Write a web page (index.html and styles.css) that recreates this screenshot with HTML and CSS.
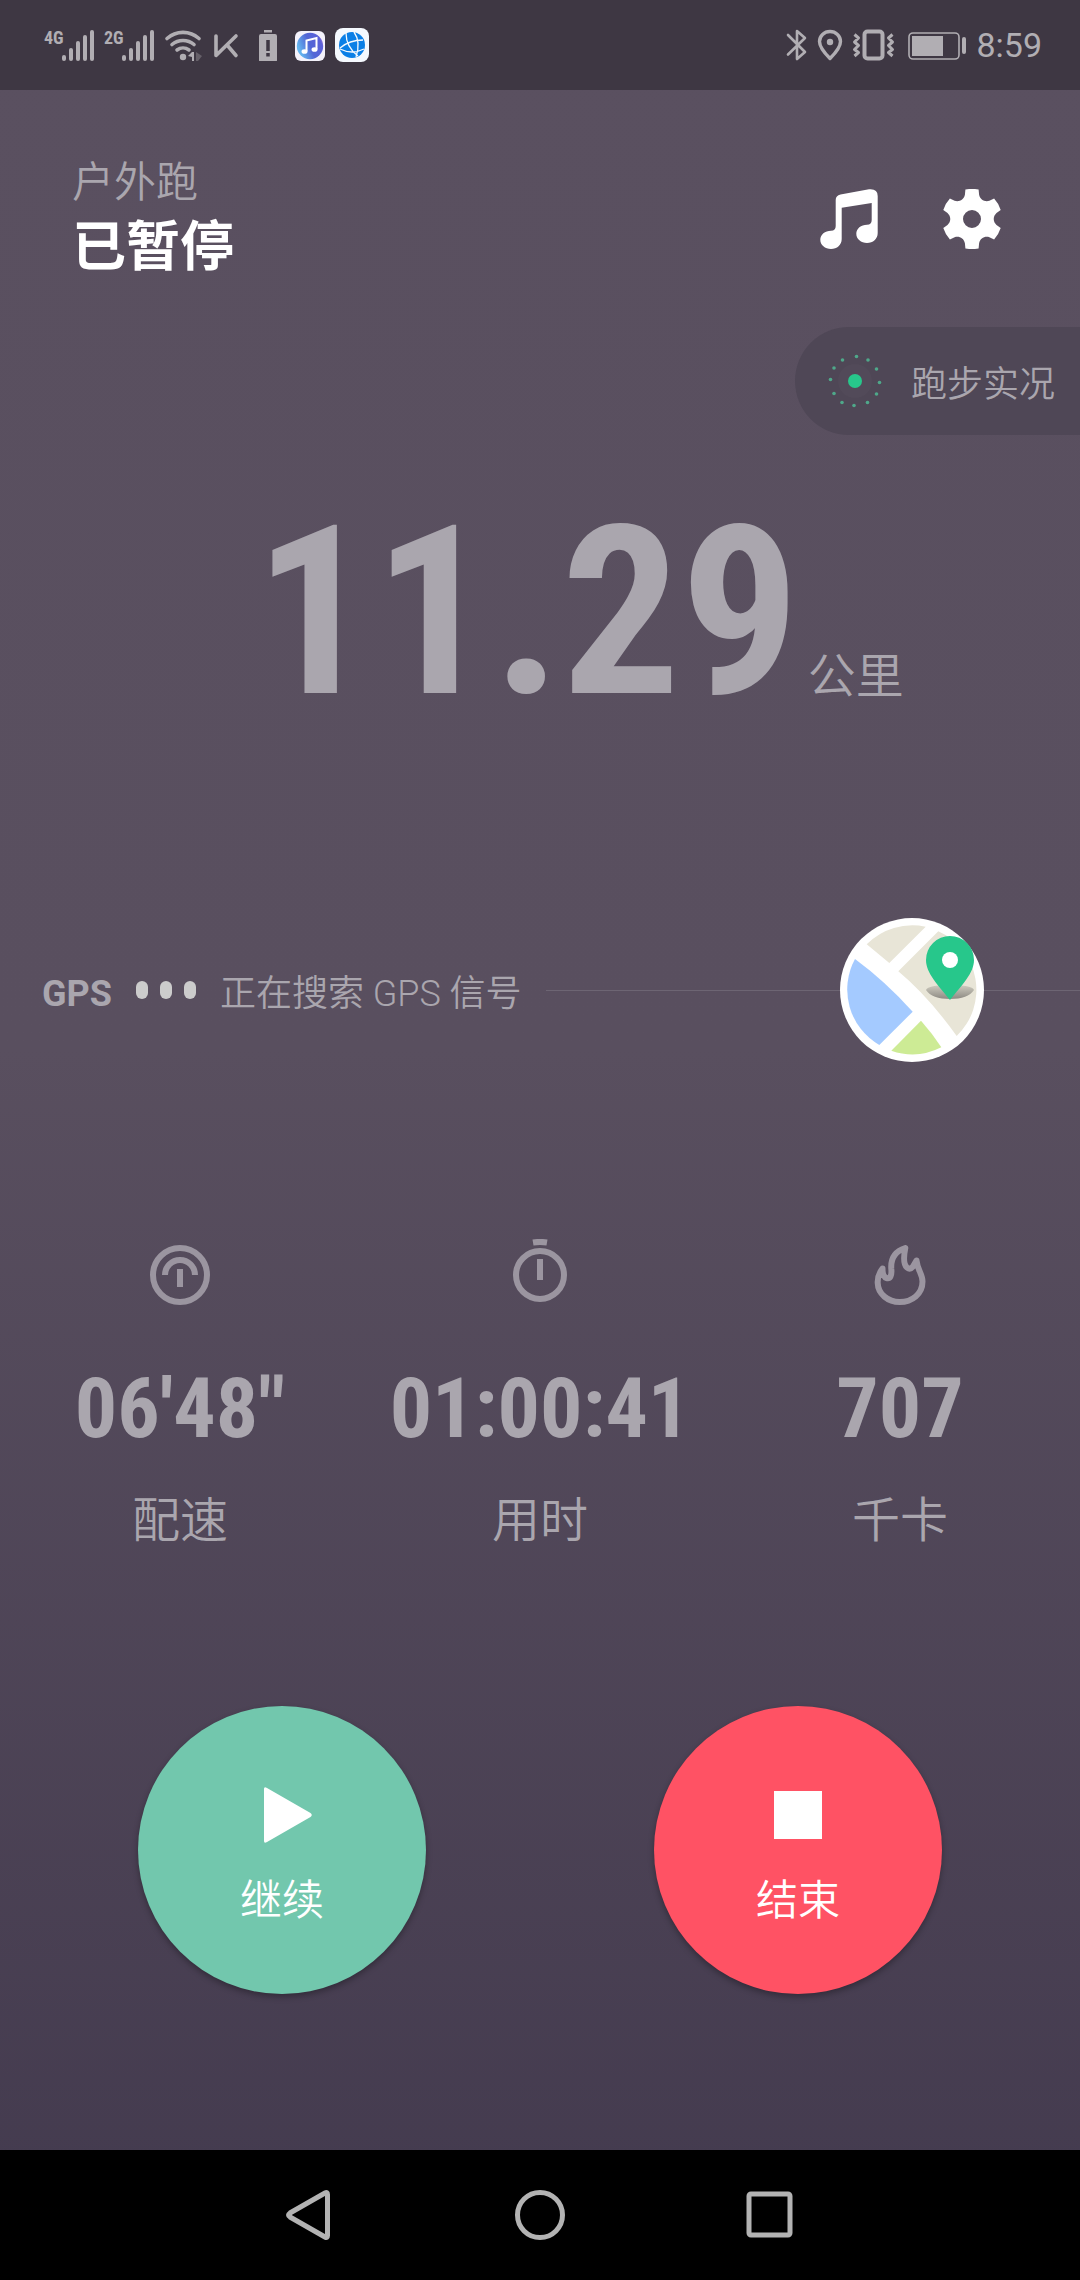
FILE: index.html
```
<!DOCTYPE html>
<html lang="zh-CN">
<head>
<meta charset="utf-8">
<meta name="viewport" content="width=device-width, initial-scale=1">
<title>户外跑</title>
<link rel="stylesheet" href="styles.css">
</head>
<body>
<div class="screen">
  <header class="status">
    <div class="status-side">
      <div class="signal"><span class="net">4G</span>
        <svg width="34" height="32" viewBox="0 0 34 32" fill="currentColor"><rect y="26" width="4" height="6" rx="2"/><rect x="7" y="19" width="4" height="13" rx="2"/><rect x="14" y="12" width="4" height="20" rx="2"/><rect x="21" y="6" width="4" height="26" rx="2"/><rect x="28" y="1" width="4" height="31" rx="2"/></svg>
      </div>
      <div class="signal"><span class="net">2G</span>
        <svg width="34" height="32" viewBox="0 0 34 32" fill="currentColor"><rect y="26" width="4" height="6" rx="2"/><rect x="7" y="19" width="4" height="13" rx="2"/><rect x="14" y="12" width="4" height="20" rx="2"/><rect x="21" y="6" width="4" height="26" rx="2"/><rect x="28" y="1" width="4" height="31" rx="2"/></svg>
      </div>
      <svg width="40" height="32" viewBox="0 0 40 32" fill="none" stroke="currentColor" stroke-width="3.6" stroke-linecap="round"><path d="M3 9.5a24 24 0 0 1 32 0M8 15.500a17 17 0 0 1 22 0M13 21a10 10 0 0 1 12 0"/><circle cx="19" cy="28" r="3.200" fill="currentColor" stroke="none"/><path fill="currentColor" stroke="none" d="M24 27l4-4h2v9h-2v-4z"/><path fill="currentColor" stroke="none" opacity=".35" d="M32 23l6 4-4 5h-2z"/></svg>
      <svg width="28" height="32" viewBox="0 0 28 32" fill="none" stroke="currentColor" stroke-width="3.600" stroke-linecap="round" stroke-linejoin="round"><path d="M4 7v19.500L24 7M15.500 16.500L24 26.500"/></svg>
      <svg width="38" height="32" viewBox="0 0 38 32"><path fill="currentColor" d="M16 1h8v2.500h-8zM13 5h14q2 0 2 2v24q0 2-2 2H13q-2 0-2-2V7q0-2 2-2z"/><path stroke="#3e3743" stroke-width="3.500" d="M20 11v11M20 24v3.500"/></svg>
      <svg width="32" height="32" viewBox="0 0 32 32"><defs><linearGradient id="m" x1="0" x2="1" y1=".4"><stop stop-color="#63b4ee"/><stop offset=".4" stop-color="#5266d6"/><stop offset=".8" stop-color="#5b60d8"/><stop offset="1" stop-color="#e58ad8"/></linearGradient></defs><rect x="1" y="2" width="30" height="30" rx="6" fill="#f4f2fb"/><circle cx="16" cy="17" r="13.200" fill="url(#m)"/><g fill="none" stroke="#fff" stroke-width="2"><path d="M12.500 22V11.500L22.500 9v11"/></g><ellipse cx="10.500" cy="22.500" rx="3" ry="2.300" fill="#fff"/><ellipse cx="20.500" cy="20.500" rx="3" ry="2.300" fill="#fff"/></svg>
      <svg width="36" height="36" viewBox="0 0 36 36"><rect x="1" y="1" width="34" height="34" rx="8" fill="#f5f9fe"/><circle cx="18" cy="18" r="13" fill="#0b7fe6"/><g fill="none" stroke="#f5f9fe" stroke-width="1.300"><path d="M6 21C12 16 20 13 29 13M12 6c0 9 4 17 12 23M6 22c8 4 16 4 24 0M20 5c5 7 5 16 2 25"/></g></svg>
    </div>
    <div class="status-side">
      <svg width="24" height="32" viewBox="0 0 24 32" fill="none" stroke="currentColor" stroke-width="2.600" stroke-linejoin="round" stroke-linecap="round"><path d="M4 6l17 17-8 7V2l8 7L4 25.500"/></svg>
      <svg width="28" height="32" viewBox="0 0 28 32"><path fill="none" stroke="currentColor" stroke-width="3.400" stroke-linejoin="round" d="M14 29.500C8 23.500 3.500 18 3.500 12.500a10.500 10 0 0 1 21 0C24.500 18 20 23.500 14 29.500z"/><circle cx="14" cy="13" r="3.200" fill="currentColor"/></svg>
      <svg width="44" height="32" viewBox="0 0 44 32" fill="none" stroke="currentColor"><rect x="12.500" y="2.500" width="18" height="27" rx="3" stroke-width="4"/><path stroke-width="3" stroke-linejoin="round" d="M2.500 5.500l4 3.500-4 4 4 3.500-4 4 4 3-4 3.500M40.500 5.500l-4 3.500 4 4-4 3.500 4 4-4 3 4 3.500"/></svg>
      <svg width="64" height="32" viewBox="0 0 64 32"><rect x="5" y="4" width="50" height="26" rx="4" fill="none" stroke="currentColor" stroke-width="1.600"/><path fill="currentColor" d="M8 7h31v20H8z"/><rect x="58" y="8" width="4" height="17" rx="2" fill="currentColor"/></svg>
      <time class="clock">8:59</time>
    </div>
  </header>

  <main class="run">
    <div class="top">
      <div>
        <p class="mode">户外跑</p>
        <h1 class="state">已暂停</h1>
      </div>
      <div class="tools">
        <button class="icon-btn" aria-label="音乐"><svg width="60" height="60" viewBox="0 0 60 60"><path fill="#fff" d="M16.700 11Q16.700 6.500 21.500 5.500L50 .3Q58.700-.5 58.700 7V44C58.700 50 54 54 48 54 42 54 37.300 50 37.300 44.800 37.300 39.500 42 35.700 48 35.700Q52.700 35.700 52.700 31V14L22.700 18.700V50C22.700 56 18 60 12 60 6 60 1.300 56 1.300 50.800 1.300 45.500 6 41.700 12 41.700Q16.700 41.700 16.700 37Z"/></svg></button>
        <button class="icon-btn" aria-label="设置"><svg width="60" height="60" viewBox="-30 -30 60 60"><path fill="#fff" fill-rule="evenodd" d="M28.700-9L24.500-6C20.800-2.500 20.800 2.500 24.500 6L28.700 9A30 30 0 0 1 22.100 20.400L17.400 18.200C12.600 16.800 8.200 19.300 7.100 24.200L6.600 29.400A30 30 0 0 1-6.600 29.400L-7.100 24.200C-8.200 19.300-12.600 16.800-17.400 18.200L-22.100 20.400A30 30 0 0 1-28.700 9L-24.500 6C-20.800 2.500-20.800-2.500-24.500-6L-28.700-9A30 30 0 0 1-22.100-20.400L-17.400-18.200C-12.600-16.800-8.200-19.300-7.100-24.200L-6.600-29.400A30 30 0 0 1 6.600-29.400L7.100-24.200C8.200-19.300 12.600-16.800 17.400-18.200L22.100-20.400A30 30 0 0 1 28.700-9ZM9 0A9 9 0 1 0-9 0 9 9 0 1 0 9 0Z"/></svg></button>
      </div>
    </div>

    <button class="live">
      <svg width="60" height="60" viewBox="0 0 60 60"><circle cx="30" cy="30" r="17" fill="#fff" opacity=".02"/><circle cx="30" cy="30" r="7" fill="#27c78b"/><g fill="#4fa88a"><circle cx="31.500" cy="5.500" r="1.800"/><circle cx="43" cy="9" r="1.800"/><circle cx="51.500" cy="18" r="1.800"/><circle cx="54.500" cy="31.500" r="1.800"/><circle cx="51.500" cy="43" r="1.800"/><circle cx="42.500" cy="51.500" r="1.800"/><circle cx="29" cy="54.500" r="1.800"/><circle cx="17" cy="51.500" r="1.800"/><circle cx="9" cy="42.500" r="1.800"/><circle cx="5.500" cy="28.500" r="1.800"/><circle cx="9" cy="17" r="1.800"/><circle cx="17.500" cy="9" r="1.800"/></g></svg>
      <span>跑步实况</span>
    </button>

    <p class="distance"><span class="distance-value">11.29</span><span class="unit">公里</span></p>

    <div class="gps">
      <p class="gps-text">
        <strong class="gps-name">GPS</strong>
        <span class="dots"><i></i><i></i><i></i></span>
        <span>正在搜索 GPS 信号</span>
      </p>
      <div class="gps-line">
        <button class="map" aria-label="地图"><svg width="144" height="144" viewBox="0 0 144 144"><defs><linearGradient id="s" x1="0" x2="0" y1="0" y2="1"><stop stop-color="#cfccc0"/><stop offset="1" stop-color="#8d8a83"/></linearGradient></defs><circle cx="72" cy="72" r="72" fill="#fff"/><path fill="#e8e5d7" d="M26.700 26.300L49.300 45 85.700 8.700A64 64 0 0 0 26.700 26.300ZM58.300 53.300L98.300 13.300A64 64 0 0 1 116.700 118Q88 78 58.300 53.300Z"/><path fill="#a4caff" d="M15 41Q45 63 72.700 93.700L39.300 127A64 64 0 0 1 15 41Z"/><path fill="#cdeb95" d="M81 102.700L51.300 132.700A64 64 0 0 0 101.300 129.300Q92 115 81 102.700Z"/><path fill="url(#s)" d="M86 72q2-5 24-5t24 5q-6 9-24 9t-24-9z"/><path fill="#27c78b" d="M110 82C98 67 86 55 86 42a24 24 0 0 1 48 0C134 55 122 67 110 82z"/><circle cx="110" cy="42" r="8" fill="#fff"/></svg></button>
      </div>
    </div>

    <dl class="stats">
      <div class="stat">
        <svg width="60" height="66" viewBox="0 0 60 66" fill="none" stroke="currentColor" stroke-width="6"><circle cx="30" cy="36" r="27"/><path d="M15 36a15 15 0 0 1 30 0M30 30v18"/></svg>
        <dd>06'48"</dd><dt>配速</dt>
      </div>
      <div class="stat">
        <svg width="60" height="66" viewBox="0 0 60 66" fill="none" stroke="currentColor" stroke-width="6"><circle cx="30" cy="36" r="24"/><path d="M30 20v21M23 3.500q7-1.200 14 0"/></svg>
        <dd>01:00:41</dd><dt>用时</dt>
      </div>
      <div class="stat">
        <svg width="60" height="66" viewBox="0 -6 60 66" fill="none" stroke="currentColor" stroke-width="6" stroke-linejoin="round"><path d="M12.500 23.500C9 28 7.500 33 7.700 38 8 49 18 57 29.700 57 42 57 52.500 49 52.500 36.500 52.500 29 47.500 25 46.500 15.500L43 21.500Q40 25 37 22.500C33 19 33.500 12 35.300 3 26 6 20.500 13 21.300 24 22 31 20 34 16.500 33 13 32 12.500 28 12.500 23.500Z"/></svg>
        <dd>707</dd><dt>千卡</dt>
      </div>
    </dl>

    <div class="actions">
      <button class="action go"><svg width="60" height="60" viewBox="0 0 60 60"><path fill="#fff" d="M12 4Q12 1 15 3L58.500 28Q61 30 58.500 32L15 57Q12 59 12 56z"/></svg>继续</button>
      <button class="action end"><svg width="60" height="60" viewBox="0 0 60 60"><path fill="#fff" d="M6 6h48v48H6z"/></svg>结束</button>
    </div>
  </main>

  <nav class="nav">
    <button aria-label="返回"><svg width="52" height="52" viewBox="0 0 52 52"><path d="M43.500 5.500V46.500Q43.500 49.500 41 48L6 28Q3 26 6 24L41 4Q43.500 2.500 43.500 5.500Z"/></svg></button>
    <button aria-label="主页"><svg width="52" height="52" viewBox="0 0 52 52"><circle cx="26" cy="26" r="22.500"/></svg></button>
    <button aria-label="最近任务"><svg width="52" height="52" viewBox="0 0 52 52"><rect x="5" y="5" width="41" height="41" rx="2"/></svg></button>
  </nav>
</div>
</body>
</html>
```
FILE: styles.css
```
* { box-sizing: border-box; }

body, p, h1, dl, dd { margin: 0; }

body {
  font-family: Roboto, "Noto Sans CJK SC", sans-serif;
  font-weight: 350;
  color: #aaa6ae;
}

button {
  padding: 0;
  border: 0;
  background: none;
  font: inherit;
  color: inherit;
}

svg { display: block; flex: none; }

.screen {
  min-height: 100vh;
  display: flex;
  flex-direction: column;
  background: linear-gradient(#5a5060 0, #594f5f 46%, #443b4f 96%);
}

.status {
  height: 90px;
  padding: 0 38px 0 44px;
  display: flex;
  align-items: center;
  justify-content: space-between;
  background: #3e3743;
  color: #b1aeb3;
}

.status-side {
  display: flex;
  align-items: center;
  gap: 8px;
}

.signal {
  width: 52px;
  display: flex;
}

.net {
  width: 18px;
  font: bold 18px/18px "Roboto Condensed", sans-serif;
}

.clock {
  font-size: 34px;
  font-weight: 400;
}

.run {
  flex: 1;
  display: flex;
  flex-direction: column;
}

.top {
  display: flex;
  justify-content: space-between;
  padding: 64px 78px 0 72px;
}

.mode {
  font-size: 42px;
  line-height: 58px;
}

.state {
  font-size: 54px;
  line-height: 72px;
  font-weight: 700;
  color: #fff;
}

.tools {
  display: flex;
  gap: 63px;
  padding-top: 35px;
}

.icon-btn { height: 60px; }

.live {
  align-self: flex-end;
  height: 108px;
  margin-top: 43px;
  padding: 0 25px 0 30px;
  display: flex;
  align-items: center;
  gap: 26px;
  border-radius: 54px 0 0 54px;
  background: #4f4756;
  font-size: 36px;
}

.distance {
  margin-top: 44px;
  padding-left: 78px;
  display: flex;
  justify-content: center;
  align-items: baseline;
  gap: 8px;
}

.distance-value {
  font: bold 236px/268px "Roboto Condensed", sans-serif;
}

.unit { font-size: 48px; }

.gps {
  margin-top: 171px;
  padding-left: 42px;
  display: flex;
  align-items: center;
  font-size: 36px;
}

.gps-text {
  display: flex;
  align-items: baseline;
}

.gps-name { font-weight: 700; }

.dots {
  align-self: center;
  display: flex;
  gap: 12px;
  margin: 0 24px;
}

.dots i {
  width: 12px;
  height: 18px;
  border-radius: 6px;
  background: #ccc;
}

.gps-line {
  flex: 1;
  margin-left: 24px;
  padding-right: 96px;
  display: flex;
  justify-content: flex-end;
  background: linear-gradient(#6d6573, #6d6573) center / 100% 1px no-repeat;
}

.stats {
  margin-top: 177px;
  display: grid;
  grid-template-columns: repeat(3, 1fr);
}

.stat {
  display: flex;
  flex-direction: column;
  align-items: center;
}

.stat svg { color: #9b95a0; }

.stat dd {
  margin-top: 56px;
  font: bold 84px/96px "Roboto Condensed", sans-serif;
}

.stat dt {
  margin-top: 32px;
  font-size: 48px;
  line-height: 64px;
}

.actions {
  margin-top: 153px;
  display: flex;
  justify-content: center;
  gap: 228px;
}

.action {
  width: 288px;
  height: 288px;
  padding-top: 16px;
  border-radius: 50%;
  display: flex;
  flex-direction: column;
  align-items: center;
  justify-content: center;
  gap: 26px;
  font-size: 42px;
  line-height: 60px;
  color: #fff;
  box-shadow: 0 3px 6px rgba(0, 0, 0, .3);
}

.go { background: #72c7ad; }
.end { background: #ff5264; }

.nav {
  height: 130px;
  padding: 0 18%;
  display: grid;
  grid-template-columns: repeat(3, 1fr);
  place-items: center;
  background: #000;
}

.nav svg {
  fill: none;
  stroke: #b3b3b3;
  stroke-width: 5;
}
```
